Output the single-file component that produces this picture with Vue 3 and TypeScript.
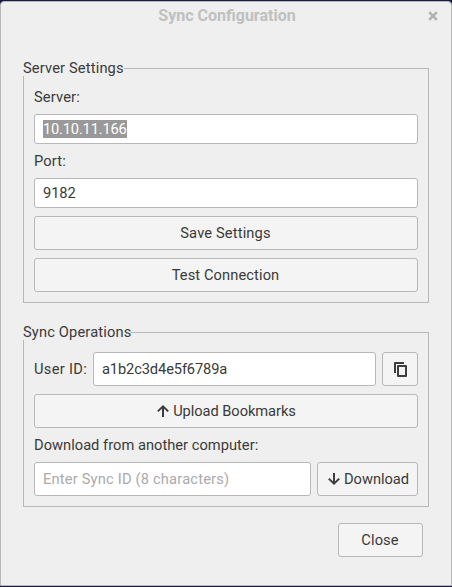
<script setup lang="ts">
import { ref } from 'vue'

const port = ref('9182')
const userId = ref('a1b2c3d4e5f6789a')
const syncId = ref('')
const server = ref('10.10.11.166')
</script>

<template>
  <main class="window">
    <header class="titlebar">
      <h1 class="title">Sync Configuration</h1>
      <button class="dismiss" aria-label="Close window">
        <svg width="10" height="10" viewBox="0 0 10 10">
          <path d="M1.2 1.2 8.8 8.8M8.8 1.2 1.2 8.8" />
        </svg>
      </button>
    </header>

    <section class="group">
      <h2 class="legend"><span>Server Settings</span></h2>
      <div class="label">Server:</div>
      <div class="entry short"><span class="selected">{{ server }}</span></div>
      <label class="label" for="port">Port:</label>
      <input id="port" v-model="port" class="entry short port" />
      <button class="btn save">Save Settings</button>
      <button class="btn test">Test Connection</button>
    </section>

    <section class="group operations">
      <h2 class="legend"><span>Sync Operations</span></h2>
      <div class="row">
        <label class="label user" for="uid">User ID:</label>
        <input id="uid" v-model="userId" class="entry grow uid" />
        <button class="btn copy" aria-label="Copy user ID">
          <svg class="copy-icon" width="12" height="14" viewBox="0 0 12 14">
            <path d="M1 11V1H10M4 4H12V14H4Z" />
          </svg>
        </button>
      </div>
      <button class="btn upload">
        <svg class="arrow" width="12" height="12" viewBox="0 0 12 12">
          <path d="M6 12V1.5M.8 6.4 6 1.4 11.2 6.4" />
        </svg>
        <span>Upload Bookmarks</span>
      </button>
      <label class="label tight" for="sync">Download from another computer:</label>
      <div class="row">
        <input id="sync" v-model="syncId" class="entry grow sync" placeholder="Enter Sync ID (8 characters)" />
        <button class="btn download">
          <svg class="arrow" width="12" height="12" viewBox="0 0 12 12">
            <path d="M6 0V10.5M.8 5.6 6 10.6 11.2 5.6" />
          </svg>
          <span>Download</span>
        </button>
      </div>
    </section>

    <footer class="footer">
      <button class="btn close">Close</button>
    </footer>
  </main>
</template>

<style>
body {
  margin: 0;
  background: #171d42;
}
</style>

<style scoped>
.window {
  box-sizing: border-box;
  width: 452px;
  height: 585px;
  margin-top: 1px;
  padding: 0 22px;
  border: 1px solid #b8b8b9;
  border-radius: 4px 4px 0 0;
  background: #efefef;
  color: #3a3a3a;
  font: 14.667px/18px Roboto, sans-serif;
  letter-spacing: 0.15px;
}
.titlebar {
  display: flex;
  align-items: center;
  height: 28px;
  margin: 0 -9px 0 -22px;
}
.title {
  flex: 1;
  margin: 0 0 0 25px;
  text-align: center;
  font-size: 16px;
  line-height: 28px;
  font-weight: 700;
  letter-spacing: 0;
  color: #c0c0c0;
}
.dismiss {
  display: flex;
  padding: 0;
  border: 0;
  background: none;
}
.dismiss path {
  fill: none;
  stroke: #b2b2b2;
  stroke-width: 2.6;
}
.group {
  box-sizing: border-box;
  display: flex;
  flex-direction: column;
  gap: 8px;
  height: 235px;
  margin-top: 38px;
  padding: 0 10px;
  border: 1px solid #b8b8b8;
}
.group.operations {
  height: 175px;
  margin-top: 29px;
}
.legend {
  height: 20px;
  margin: -9px 0 0 -11px;
  font: inherit;
  line-height: 16px;
}
.legend span {
  display: inline-block;
  background: #efefef;
}
.label {
  height: 18px;
  white-space: nowrap;
}
.label.user {
  width: 53px;
  letter-spacing: 0.3px;
}
.label.tight {
  letter-spacing: 0.02px;
}
.entry,
.btn {
  box-sizing: border-box;
  height: 34px;
  flex-shrink: 0;
  margin: 0;
  border: 1px solid #b8b8b8;
  border-radius: 3px;
  font: inherit;
  letter-spacing: inherit;
  color: inherit;
}
.entry {
  display: block;
  padding: 0 8px;
  background: #fff;
  outline: none;
}
.entry.short {
  height: 30px;
}
.entry.port {
  letter-spacing: -0.1px;
}
.entry.uid {
  letter-spacing: -0.12px;
}
.entry.sync {
  letter-spacing: 0.19px;
}
div.entry {
  display: flex;
  align-items: center;
}
.entry::placeholder {
  color: #aaa;
  opacity: 1;
}
.selected {
  background: #999;
  color: #fff;
  letter-spacing: -0.18px;
}
.btn {
  display: flex;
  align-items: center;
  justify-content: center;
  gap: 4px;
  padding: 0;
  background: #f4f4f4;
}
.btn.save {
  padding-right: 1px;
}
.btn.test {
  padding-right: 1px;
  letter-spacing: 0.1px;
}
.btn.upload {
  padding-left: 1px;
  letter-spacing: -0.06px;
}
.row {
  display: flex;
  align-items: center;
  gap: 6px;
}
.grow {
  flex: 1;
  min-width: 0;
}
.copy {
  width: 36px;
}
.copy-icon {
  overflow: visible;
}
.copy-icon path,
.arrow path {
  fill: none;
  stroke: #3d3d3d;
  stroke-width: 2;
}
.copy-icon path {
  stroke-linejoin: round;
}
.btn.download {
  width: 101px;
  padding-left: 2px;
  letter-spacing: -0.03px;
}
.footer {
  display: flex;
  justify-content: flex-end;
  margin: 16px 6px 0 0;
}
.btn.close {
  width: 85px;
  padding-right: 1px;
  letter-spacing: 0.1px;
}
</style>
